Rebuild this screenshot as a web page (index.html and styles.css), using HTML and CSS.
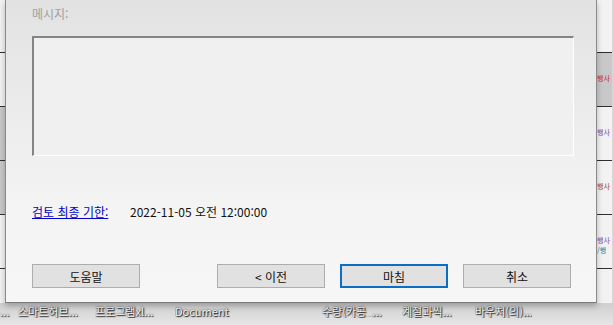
FILE: index.html
```html
<!DOCTYPE html>
<html lang="ko">
<head>
    <meta charset="UTF-8">
    <title>메시지</title>
    <link rel="stylesheet" href="styles.css">
</head>
<body>
    <div class="screen">
        <div class="top">
            <div class="side side-left">
                <div class="row"></div>
                <div class="row"></div>
                <div class="row dark"></div>
                <div class="row dark"></div>
                <div class="row"></div>
                <div class="row"></div>
            </div>

            <div class="dialog">
                <div class="msg-label">메시지:</div>
                <div class="msg-box"></div>

                <div class="due">
                    <a href="#" class="due-link">검토 최종 기한:</a>
                    <span class="due-value">2022-11-05 오전 12:00:00</span>
                </div>

                <div class="buttons">
                    <button class="btn">도움말</button>
                    <div class="spacer"></div>
                    <button class="btn">&lt; 이전</button>
                    <button class="btn primary">마침</button>
                    <button class="btn">취소</button>
                </div>
            </div>

            <div class="side side-right">
                <div class="row"></div>
                <div class="row dark"><span class="tag red">행사</span></div>
                <div class="row"><span class="tag purple">행사</span></div>
                <div class="row"><span class="tag brown">행사</span></div>
                <div class="row"><span class="tag purple">행사</span><span class="tag teal">/행</span></div>
                <div class="row"></div>
            </div>
        </div>

        <div class="desktop">
            <span class="icon-label" style="width: 18px">...</span>
            <span class="icon-label" style="width: 77px">스마트허브...</span>
            <span class="icon-label" style="width: 80px">프로그램xl...</span>
            <span class="icon-label" style="width: 147px">Document</span>
            <span class="icon-label" style="width: 80px">수량(카공_...</span>
            <span class="icon-label" style="width: 73px">계절과씩...</span>
            <span class="icon-label">바우처(의)...</span>
        </div>
    </div>
</body>
</html>
```

FILE: styles.css
```css
body {
    margin: 0;
    font-family: "Noto Sans CJK KR", "Noto Sans", sans-serif;
    font-size: 12px;
    background-color: #d8d8d8;
    overflow: hidden;
}
.screen {
    width: 613px;
    height: 325px;
    display: flex;
    flex-direction: column;
}
.top {
    display: flex;
    height: 303px;
}
.side {
    display: flex;
    flex-direction: column;
    background-color: #f2f2f2;
}
.side-left {
    width: 5px;
}
.side-right {
    width: 15px;
    overflow: hidden;
}
.row {
    height: 53px;
    border-bottom: 1px solid #303030;
    flex: none;
}
.row:first-child {
    height: 52px;
}
.row:last-child {
    border-bottom: none;
}
.row.dark {
    background-color: #c8c8c8;
}
.tag {
    display: block;
    font-size: 7px;
    line-height: 10px;
    margin-top: 20px;
    margin-left: 0;
    white-space: nowrap;
}
.tag + .tag {
    margin-top: 0;
}
.red { color: #d8202a; }
.purple { color: #7a4aa8; }
.brown { color: #a84030; }
.teal { color: #2a7a9a; }

.dialog {
    width: 592px;
    border-left: 1px solid #8a8a8a;
    border-right: 1px solid #8a8a8a;
    border-bottom: 1px solid #7a7a7a;
    background: linear-gradient(to bottom, #e2e2e2, #f4f4f4 70%, #f6f6f6);
    padding: 0 0 0 26px;
    box-sizing: border-box;
    display: flex;
    flex-direction: column;
    box-shadow: 0 3px 6px rgba(0,0,0,0.25);
    z-index: 1;
}
.msg-label {
    color: #a0a0a0;
    margin-top: 5px;
    line-height: 18px;
}
.msg-box {
    margin-top: 13px;
    width: 542px;
    height: 120px;
    box-sizing: border-box;
    border-top: 2px solid #848484;
    border-left: 2px solid #848484;
    border-bottom: 1px solid #ffffff;
    border-right: 1px solid #ffffff;
    background-color: #f0f0f0;
}
.due {
    margin-top: 47px;
    display: flex;
    align-items: center;
    line-height: 18px;
}
.due-link {
    color: #0000cc;
    text-decoration: underline;
    width: 98px;
}
.due-value {
    color: #111;
}
.buttons {
    margin-top: 43px;
    display: flex;
    gap: 15px;
}
.spacer {
    width: 47px;
}
.btn {
    width: 108px;
    height: 24px;
    background-color: #e1e1e1;
    border: 1px solid #adadad;
    font-family: "Noto Sans CJK KR", "Noto Sans", sans-serif;
    font-size: 12px;
    color: #111;
    padding: 0;
}
.btn.primary {
    border: 2px solid #0a6fc2;
}

.desktop {
    flex: 1;
    display: flex;
    align-items: flex-start;
    padding-top: 1px;
    background: linear-gradient(to bottom, #cfcfcf, #e6e6e6);
    color: #f4f4f4;
    font-size: 11px;
    line-height: 14px;
    text-shadow: 0 0 2px #222, 1px 1px 1px #222;
}
.icon-label {
    flex: none;
    white-space: nowrap;
    overflow: hidden;
}
```
